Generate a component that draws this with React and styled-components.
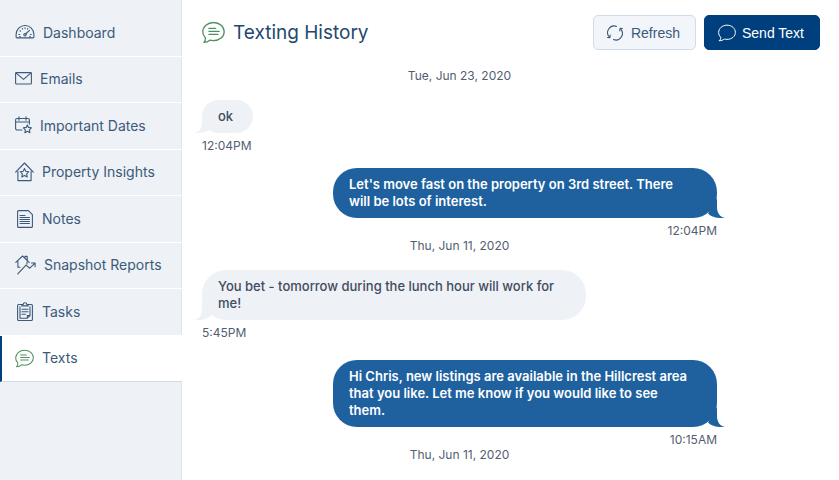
import React from 'react';
import styled, { createGlobalStyle, ThemeProvider } from 'styled-components';

const theme = {
  navy: '#003f7d',
  blue: '#1f619f',
  green: '#4d9160',
  ink: '#3c5a7a',
  heading: '#23486f',
  text: '#414c5e',
  muted: '#525e70',
  panel: '#eef1f6',
  line: '#dde5ed'
};

const GlobalStyle = createGlobalStyle`
  * {
    box-sizing: border-box;
  }

  body {
    margin: 0;
    background: #fff;
    font-family: Inter, sans-serif;
  }
`;

const Page = styled.div`
  display: flex;
  height: 100vh;
  overflow: hidden;
`;

const Sidebar = styled.nav`
  flex: 0 0 182px;
  padding-top: 10px;
  background: ${props => props.theme.panel};
  box-shadow: inset -1px 0 ${props => props.theme.line};
`;

const NavList = styled.ul`
  display: grid;
  grid-template-rows: repeat(8, 1fr);
  height: 372px;
  margin: 0;
  padding: 0;
  list-style: none;
`;

const NavLink = styled.a`
  display: flex;
  align-items: center;
  gap: 8px;
  height: 100%;
  padding-left: ${props => (props.$active ? '13px' : '15px')};
  border-left: ${props =>
    props.$active ? `2px solid ${props.theme.navy}` : '0'};
  border-bottom: 1px solid ${props => (props.$active ? '#d3d9e0' : '#fff')};
  background: ${props => (props.$active ? '#fff' : 'transparent')};
  color: ${props => props.theme.ink};
  font-size: 14px;
  line-height: 20px;
  text-decoration: none;
`;

const Icon = styled.svg`
  flex: none;
  fill: none;
  stroke: ${props => props.$color || 'currentColor'};
  stroke-width: 1.1;
  stroke-linecap: round;
  stroke-linejoin: round;
`;

const Main = styled.main`
  flex: 1;
  min-width: 0;
`;

const Header = styled.header`
  display: flex;
  align-items: center;
  gap: 8px;
  padding: 15px 19px 0 20px;
`;

const Title = styled.h1`
  flex: 1;
  margin: 0;
  color: ${props => props.theme.heading};
  font-size: 19px;
  font-weight: 400;
  line-height: 24px;
`;

const Button = styled.button`
  display: flex;
  align-items: center;
  gap: ${props => (props.$primary ? '6px' : '8px')};
  height: 35px;
  padding: 0 15px 0 13px;
  border: 1px solid ${props => (props.$primary ? props.theme.navy : '#d0dce8')};
  border-radius: 5px;
  background: ${props => (props.$primary ? props.theme.navy : '#f2f5f9')};
  color: ${props => (props.$primary ? '#fff' : props.theme.ink)};
  font-family: 'Liberation Sans', Arial, sans-serif;
  font-size: 14px;
`;

const Feed = styled.div`
  padding: 18px 122px 0 20px;
`;

const Day = styled.section`
  display: flex;
  flex-direction: column;
`;

const DayLabel = styled.h2`
  margin: 0 0 16px;
  color: ${props => props.theme.muted};
  font-size: 12px;
  font-weight: 400;
  line-height: 16px;
  text-align: center;
`;

const Messages = styled.div`
  display: flex;
  flex-direction: column;
  gap: ${props => (props.$loose ? '20px' : '15px')};
`;

const Message = styled.article`
  display: flex;
  flex-direction: column;
  align-items: ${props => (props.$sent ? 'flex-end' : 'flex-start')};
`;

const Bubble = styled.p`
  position: relative;
  max-width: 384px;
  margin: 0;
  padding: 8px 20px 8px 16px;
  border-radius: 24px;
  background: ${props => (props.$sent ? props.theme.blue : props.theme.panel)};
  color: ${props => (props.$sent ? '#fff' : props.theme.text)};
  font-size: 13px;
  font-weight: ${props => (props.$sent ? 600 : 500)};
  line-height: 17px;
`;

const Tail = styled.svg`
  position: absolute;
  bottom: 0;
  ${props => (props.$sent ? 'right: -8px;' : 'left: -8px;')}
  fill: ${props => (props.$sent ? props.theme.blue : props.theme.panel)};
`;

const Time = styled.time`
  margin-top: 6px;
  color: ${props => props.theme.muted};
  font-size: 12px;
  line-height: 14px;
`;

const GaugeIcon = () => (
  <Icon width="20" height="18" viewBox="0 0 20 18" aria-hidden="true">
    <path d="M2 13.9h16a.9.9 0 0 0 .9-.9v-2.600a8.900 8.900 0 0 0-17.800 0V13a.9.9 0 0 0 .9.900z" />
    <path d="M3.800 10.500h.9M15.300 10.500h.9M4.900 6.800l.6.400M7.300 4.600l.3.500M10 3.800v.6M12.700 4.600l-.3.500M4.500 12.800h1M14.500 12.800h1" />
    <path d="M10.500 10l4-3.700" />
    <circle cx="10" cy="10.800" r="1.200" />
  </Icon>
);

const MailIcon = () => (
  <Icon width="17" height="16" viewBox="0 0 17 16" aria-hidden="true">
    <rect x=".6" y="1.600" width="15.800" height="11.400" rx=".8" />
    <path d="M1.200 2.200l7.300 6.200 7.300-6.200" />
  </Icon>
);

const CalendarIcon = () => (
  <Icon width="17" height="20" viewBox="0 0 17 20" aria-hidden="true">
    <path d="M7 14H2.200A1.600 1.600 0 0 1 .6 12.400V4.100a1.600 1.600 0 0 1 1.600-1.600h10.600a1.600 1.600 0 0 1 1.600 1.600v4M.6 6h13.800M4 .8v3.400M11 .8v3.400" />
    <path d="M12.400 8.900l1.200 2.500 2.800.4-2 2 .5 2.900-2.500-1.400-2.500 1.400.5-2.900-2-2 2.800-.4z" />
  </Icon>
);

const HouseStarIcon = () => (
  <Icon width="19" height="20" viewBox="0 0 19 20" aria-hidden="true">
    <path d="M.7 10.200L9.500 1l8.800 9.200M2.900 9.600v9h13.200v-9" />
    <path d="M9.500 6.600l1.300 2.700 3 .4-2.200 2.100.6 3.100-2.700-1.500-2.700 1.500.6-3.100-2.200-2.100 3-.4z" />
  </Icon>
);

const NotesIcon = () => (
  <Icon width="19" height="20" viewBox="0 0 19 20" aria-hidden="true">
    <path d="M3.600 1.600h9.800l4 4v11.800a1 1 0 0 1-1 1H3.600a1 1 0 0 1-1-1V2.600a1 1 0 0 1 1-1z" />
    <path d="M5 6.500h5M5 8.500h9.500M5 10.500h9.500M5 12.500h9.500M5 14.500h9.500" />
  </Icon>
);

const SnapshotIcon = () => (
  <Icon width="21" height="20" viewBox="0 0 21 20" aria-hidden="true">
    <path d="M.8 7.400L7.600 1l6.600 6.300M10 2.900v-1.500h2.200v3.800M2.900 6.500v5.700H5M12 6.700v2.400" />
    <path d="M2.800 18.800l8.200-8.700 3.800 3.100 5.200-5M16.400 8h3.700v3.800" />
  </Icon>
);

const ClipboardIcon = () => (
  <Icon width="19" height="20" viewBox="0 0 19 20" aria-hidden="true">
    <path d="M7 2.500H3.600a1 1 0 0 0-1 1v14a1 1 0 0 0 1 1h12.800a1 1 0 0 0 1-1v-14a1 1 0 0 0-1-1H13" />
    <path d="M6.800 3.900V2.500h1.400a1.800 1.800 0 0 1 3.600 0h1.400v1.400z" />
    <path d="M5 4.700v11.500h7.300l2.700-2.700V4.700M12.300 16.200v-2.700H15M7 7.200h6M7 9.700h6M7 12.200h3.500" />
  </Icon>
);

const ChatIcon = ({ size = 19, lines = true, color }) => (
  <Icon
    width={size}
    height={size}
    viewBox="0 0 20 20"
    $color={color}
    aria-hidden="true"
  >
    <path d="M1.700 18.600c1-1 1.400-2.300 1.300-4C1.500 13.200.7 11.500.7 9.500.7 5 4.700 1.300 10 1.300s9.300 3.600 9.300 8-4 7.800-9.300 7.800c-1.100 0-2.100-.1-3.100-.4-1.400 1.200-3.100 1.900-5.200 1.900z" />
    {lines && <path d="M6 6.400h6M6 9h9M6 11.600h8" />}
  </Icon>
);

const RefreshIcon = () => (
  <Icon width="16" height="16" viewBox="0 0 16 16" aria-hidden="true">
    <path d="M2.500 12.200A6.600 6.600 0 0 1 9.500 1.400M13.500 3.800a6.600 6.600 0 0 1-7 10.800" />
    <path d="M.6 12.500l2.300.1.300-2.500M15.400 3.500l-2.300-.1-.3 2.500" />
  </Icon>
);

const BubbleTail = ({ sent }) => (
  <Tail
    $sent={sent}
    width="20"
    height="20"
    viewBox="0 0 20 20"
    aria-hidden="true"
  >
    <path
      d={
        sent
          ? 'M12 0V9C12 15 15 19 20 20C12 20.500 6 19 3 15.500Z'
          : 'M8 0V9C8 15 5 19 0 20C8 20.500 14 19 17 15.500Z'
      }
    />
  </Tail>
);

const links = [
  { label: 'Dashboard', icon: <GaugeIcon /> },
  { label: 'Emails', icon: <MailIcon /> },
  { label: 'Important Dates', icon: <CalendarIcon /> },
  { label: 'Property Insights', icon: <HouseStarIcon /> },
  { label: 'Notes', icon: <NotesIcon /> },
  { label: 'Snapshot Reports', icon: <SnapshotIcon /> },
  { label: 'Tasks', icon: <ClipboardIcon /> },
  { label: 'Texts', icon: <ChatIcon color={theme.green} />, active: true }
];

const days = [
  {
    id: 1,
    date: 'Tue, Jun 23, 2020',
    messages: [
      { text: 'ok', time: '12:04PM' },
      {
        text:
          "Let's move fast on the property on 3rd street. There will be lots of interest.",
        time: '12:04PM',
        sent: true
      }
    ]
  },
  {
    id: 2,
    date: 'Thu, Jun 11, 2020',
    loose: true,
    messages: [
      {
        text: 'You bet - tomorrow during the lunch hour will work for me!',
        time: '5:45PM'
      },
      {
        text:
          'Hi Chris, new listings are available in the Hillcrest area that you like. Let me know if you would like to see them.',
        time: '10:15AM',
        sent: true
      }
    ]
  },
  { id: 3, date: 'Thu, Jun 11, 2020', messages: [] }
];

const App = () => (
  <ThemeProvider theme={theme}>
    <GlobalStyle />
    <Page>
      <Sidebar>
        <NavList>
          {links.map(({ label, icon, active }) => (
            <li key={label}>
              <NavLink
                href="#"
                $active={active}
                aria-current={active ? 'page' : undefined}
              >
                {icon}
                {label}
              </NavLink>
            </li>
          ))}
        </NavList>
      </Sidebar>
      <Main>
        <Header>
          <ChatIcon size={23} color={theme.green} />
          <Title>Texting History</Title>
          <Button type="button">
            <RefreshIcon />
            Refresh
          </Button>
          <Button type="button" $primary>
            <ChatIcon size={18} lines={false} />
            Send Text
          </Button>
        </Header>
        <Feed>
          {days.map(day => (
            <Day key={day.id}>
              <DayLabel>{day.date}</DayLabel>
              <Messages $loose={day.loose}>
                {day.messages.map(({ text, time, sent }) => (
                  <Message key={text} $sent={sent}>
                    <Bubble $sent={sent}>
                      {text}
                      <BubbleTail sent={sent} />
                    </Bubble>
                    <Time>{time}</Time>
                  </Message>
                ))}
              </Messages>
            </Day>
          ))}
        </Feed>
      </Main>
    </Page>
  </ThemeProvider>
);

export default App;
